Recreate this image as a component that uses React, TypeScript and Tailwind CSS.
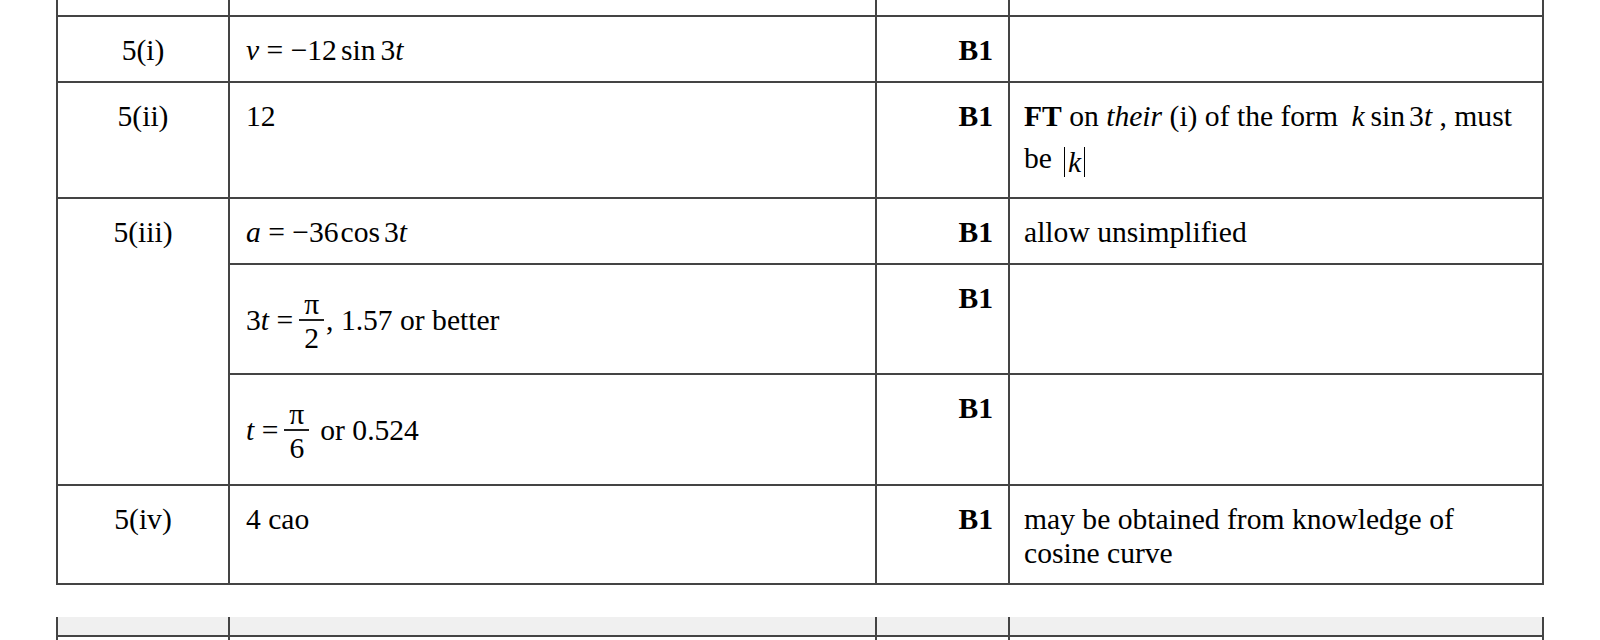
import React from "react"

function Frac({ n, d }: { n: string; d: string }) {
  return (
    <span className="mr-[2px] ml-[6px] inline-flex flex-col items-stretch">
      <span className="px-[5px] text-center leading-[28px]">{n}</span>
      <span className="mt-[1px] h-[2px] bg-[#222]" />
      <span className="mt-[3px] px-[5px] text-center leading-[28px]">{d}</span>
    </span>
  )
}

const c1 = "bg-white pt-[16px] text-center"
const c2 = "bg-white pt-[16px] pl-[16px] whitespace-nowrap"
const c3 = "bg-white pt-[16px] pr-[15px] text-right font-bold"
const c4 = "bg-white pt-[16px] pl-[14px] whitespace-nowrap"

export default function App() {
  return (
    <div className="min-h-screen bg-white font-['Liberation_Serif','Times_New_Roman',serif] text-[29.6px] leading-[34px] text-black">
      {/* mark scheme rows */}
      <div className="ml-[56px] grid w-[1488px] grid-cols-[170px_645px_131px_532px] grid-rows-[15px_64px_114px_64px_108px_109px_97px] gap-[2px] bg-[#444] px-[2px] pb-[2px]">
        <div className="bg-white" />
        <div className="bg-white" />
        <div className="bg-white" />
        <div className="bg-white" />

        <div className={c1}>5(i)</div>
        <div className={c2}>
          <i>v</i> = −12<span className="ml-[4px]">sin</span>
          <span className="ml-[5px]">3</span>
          <i>t</i>
        </div>
        <div className={c3}>B1</div>
        <div className={c4} />

        <div className={c1}>5(ii)</div>
        <div className={c2}>12</div>
        <div className={c3}>B1</div>
        <div className={c4}>
          <div>
            <b>FT</b> on <i>their</i> (i) of the form{" "}
            <span className="ml-[6px]">
              <i>k</i>
              <span className="ml-[6px]">sin</span>
              <span className="ml-[4px]">3</span>
              <i>t</i>
            </span>{" "}
            , must
          </div>
          <div className="mt-[8px]">
            be
            <span className="ml-[12px] inline-block h-[30px] border-x border-black px-[3px] align-[-4px] leading-[30px]">
              <i>k</i>
            </span>
          </div>
        </div>

        <div className={`${c1} row-span-3`}>5(iii)</div>
        <div className={c2}>
          <i>a</i> = <span>−36</span>
          <span className="ml-[2px]">cos</span>
          <span className="ml-[4px]">3</span>
          <i>t</i>
        </div>
        <div className={c3}>B1</div>
        <div className={c4}>allow unsimplified</div>

        <div className="flex items-start bg-white pt-[25px] pl-[16px] whitespace-nowrap">
          <span className="mt-[13px]">
            3<i>t</i> =
          </span>
          <Frac n="π" d="2" />
          <span className="mt-[13px]">, 1.57 or better</span>
        </div>
        <div className={c3}>B1</div>
        <div className={c4} />

        <div className="flex items-start bg-white pt-[25px] pl-[16px] whitespace-nowrap">
          <span className="mt-[13px]">
            <i>t</i> =
          </span>
          <Frac n="π" d="6" />
          <span className="mt-[13px] ml-[9px]">or 0.524</span>
        </div>
        <div className={c3}>B1</div>
        <div className={c4} />

        <div className={c1}>5(iv)</div>
        <div className={c2}>4 cao</div>
        <div className={c3}>B1</div>
        <div className={c4}>
          may be obtained from knowledge of
          <br />
          cosine curve
        </div>
      </div>

      {/* next table, cut off at the bottom */}
      <div className="mt-[32px] ml-[56px] grid w-[1488px] grid-cols-[170px_645px_131px_532px] grid-rows-[18px_12px] gap-[2px] bg-[#444] px-[2px]">
        <div className="bg-[#f0f0f0]" />
        <div className="bg-[#f0f0f0]" />
        <div className="bg-[#f0f0f0]" />
        <div className="bg-[#f0f0f0]" />
        <div className="bg-white" />
        <div className="bg-white" />
        <div className="bg-white" />
        <div className="bg-white" />
      </div>
    </div>
  )
}
